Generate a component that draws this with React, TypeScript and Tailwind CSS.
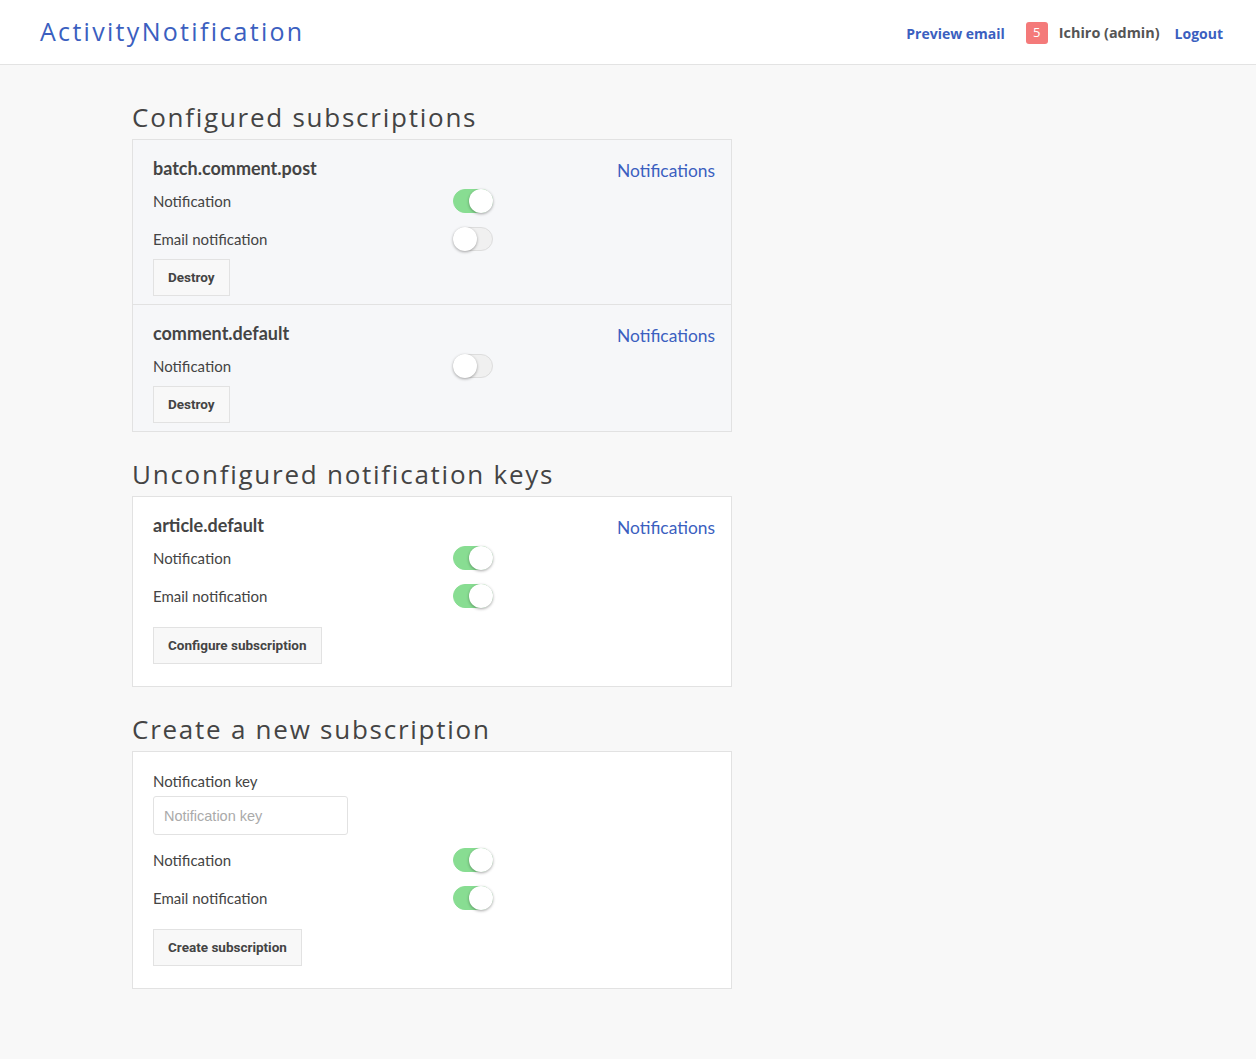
import React, { useState } from "react";

const heading = "text-[26px] leading-[31px] tracking-[1.75px] text-[#444] font-['Open_Sans',sans-serif]";
const label = "text-[15px] text-[#444] font-['Lato',sans-serif]";
const btn =
  "h-[37px] px-[14px] border border-[#e2e2e2] bg-[#f8f8f8] text-[13.5px] font-bold text-[#444] font-['Roboto',sans-serif]";

function Toggle({ on }: { on: boolean }) {
  const [checked, setChecked] = useState(on);
  return (
    <button
      type="button"
      onClick={() => setChecked(!checked)}
      className={`relative w-[40px] h-[24px] rounded-full border ${
        checked ? "bg-[#88dd92] border-[#88dd92]" : "bg-[#f0f0f0] border-[#dddddd]"
      }`}
    >
      <span
        className={`absolute top-[-1px] w-[24px] h-[24px] rounded-full bg-white shadow-[0_1px_3px_rgba(0,0,0,0.35)] ${
          checked ? "right-[-1px]" : "left-[-1px]"
        }`}
      />
    </button>
  );
}

function Row({ text, on }: { text: string; on: boolean }) {
  return (
    <div className="flex items-center h-[38px]">
      <span className={`${label} w-[300px]`}>{text}</span>
      <Toggle on={on} />
    </div>
  );
}

function TitleRow({ title }: { title: string }) {
  return (
    <div className="flex justify-between h-[24px]">
      <span className="text-[18px] leading-[24px] font-bold text-[#444] font-['Lato',sans-serif]">
        {title}
      </span>
      <a className="mt-[3px] text-[17.4px] leading-[24px] text-[#3b5fc0] font-['Lato',sans-serif]">
        Notifications
      </a>
    </div>
  );
}

export default function App() {
  return (
    <div className="min-h-screen bg-[#f8f8f8]">
      <header className="h-[65px] bg-white border-b border-[#e3e3e3] flex items-center justify-between pl-[40px] pr-[33px]">
        <span className="text-[25px] tracking-[2.3px] text-[#3b5fc0] font-['Open_Sans',sans-serif] mt-[-1px]">
          ActivityNotification
        </span>
        <nav className="flex items-center mt-[2px] text-[14px] font-bold font-['Open_Sans',sans-serif]">
          <a className="text-[#3b5fc0]">Preview email</a>
          <span className="ml-[21px] w-[22px] h-[22px] rounded-[3px] bg-[#f47a7a] text-white text-[13px] font-normal flex items-center justify-center">
            5
          </span>
          <span className="ml-[11px] text-[#555] text-[14.4px]">Ichiro (admin)</span>
          <a className="ml-[15px] text-[#3b5fc0]">Logout</a>
        </nav>
      </header>

      <main className="ml-[132px] w-[600px] pt-[37px] pb-[70px]">
        <h1 className={`${heading} mb-[6px]`}>Configured subscriptions</h1>
        <div className="border border-[#e2e2e2] bg-[#f6f7f9]">
          <div className="px-[20px] pr-[16px] pt-[16px] pb-[8px] border-b border-[#e2e2e2]">
            <TitleRow title="batch.comment.post" />
            <div className="mt-[2px]">
              <Row text="Notification" on={true} />
              <Row text="Email notification" on={false} />
            </div>
            <button className={`${btn} mt-[1px]`}>Destroy</button>
          </div>
          <div className="px-[20px] pr-[16px] pt-[16px] pb-[8px]">
            <TitleRow title="comment.default" />
            <div className="mt-[2px]">
              <Row text="Notification" on={false} />
            </div>
            <button className={`${btn} mt-[1px]`}>Destroy</button>
          </div>
        </div>

        <h1 className={`${heading} mt-[27px] mb-[6px]`}>Unconfigured notification keys</h1>
        <div className="border border-[#e2e2e2] bg-white px-[20px] pr-[16px] pt-[16px] pb-[22px]">
          <TitleRow title="article.default" />
          <div className="mt-[2px]">
            <Row text="Notification" on={true} />
            <Row text="Email notification" on={true} />
          </div>
          <button className={`${btn} mt-[12px]`}>Configure subscription</button>
        </div>

        <h1 className={`${heading} mt-[27px] mb-[6px]`}>Create a new subscription</h1>
        <div className="border border-[#e2e2e2] bg-white px-[20px] pt-[18px] pb-[22px]">
          <label className={`${label} block leading-[22px]`}>Notification key</label>
          <input
            placeholder="Notification key"
            className="mt-[4px] w-[195px] h-[39px] px-[10px] border border-[#e2e2e2] rounded-[3px] text-[14.5px] text-[#444] placeholder:text-[#aaa] font-['Liberation_Sans',sans-serif] outline-none"
          />
          <div className="mt-[6px]">
            <Row text="Notification" on={true} />
            <Row text="Email notification" on={true} />
          </div>
          <button className={`${btn} mt-[12px]`}>Create subscription</button>
        </div>
      </main>
    </div>
  );
}
